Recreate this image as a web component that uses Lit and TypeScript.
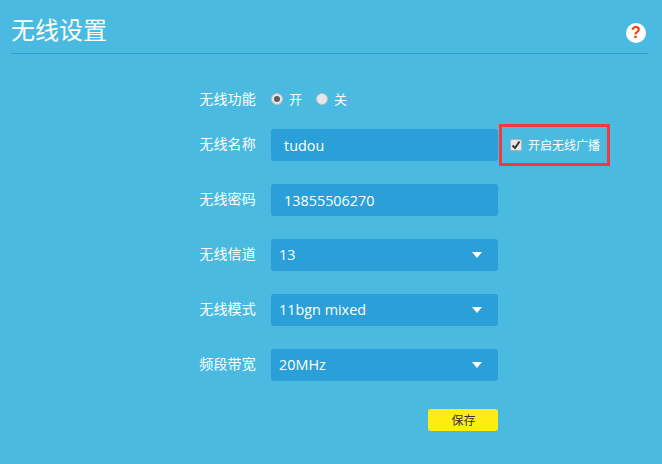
import { LitElement, html, css } from "lit";
import { customElement } from "lit/decorators.js";

const caret = html`<svg class="caret" width="10" height="6" viewBox="0 0 10 6"><path d="M0 0H10L5 6Z" fill="#fff"/></svg>`;

@customElement("app-root")
export class AppRoot extends LitElement {
  static styles = css`
    :host {
      display: block;
      width: 662px;
      height: 464px;
      background: #4abae0;
      color: #fff;
      font-family: "Open Sans", "Noto Sans CJK SC", sans-serif;
      overflow: hidden;
    }
    .head {
      margin: 0 14px 0 11px;
      height: 54px;
      box-sizing: border-box;
      border-bottom: 1px solid #2b9fd6;
      display: flex;
      justify-content: space-between;
      align-items: center;
      padding: 8px 2px 0 0;
    }
    .title { font: 24px/34px "Noto Sans CJK SC", sans-serif; font-weight: 400; margin: -3px 0 0; }
    .help { width: 20px; height: 20px; margin-top: 5px; border-radius: 50%; background: #fff; color: #f23c00; font: bold 16px/20px "Liberation Sans", sans-serif; text-align: center; }
    .form { display: flex; flex-direction: column; padding-top: 28px; }
    .row { display: flex; align-items: center; height: 32px; margin-bottom: 23px; }
    .row.radio { height: 34px; margin-bottom: 13px; }
    .label { width: 256px; box-sizing: border-box; padding-bottom: 5px; text-align: right; margin-right: 15px; font: 14px/20px "Noto Sans CJK SC", sans-serif; letter-spacing: 0.2px; }
    .row.radio .label { padding-bottom: 3px; }
    .field { width: 227px; height: 32px; box-sizing: border-box; background: #2a9fd8; border-radius: 3px; display: flex; align-items: center; justify-content: space-between; font-size: 14.4px; }
    .field.text { padding: 0 13px; }
    .field.select { padding: 0 16px 1px 8px; }
    .caret { display: block; margin-top: 1px; }
    .opt { display: flex; align-items: center; font: 13px/20px "Noto Sans CJK SC", sans-serif; margin-right: 14px; }
    .dot { width: 12px; height: 12px; box-sizing: border-box; border-radius: 50%; background: #e6e6e6; border: 1px solid #bdbdbd; margin-right: 6px; display: flex; align-items: center; justify-content: center; }
    .dot i { width: 6px; height: 6px; border-radius: 50%; background: #5f5f5f; display: block; }
    .broadcast { width: 111px; height: 42px; box-sizing: border-box; border: 3px solid #f03a3e; margin-left: 1px; display: flex; align-items: center; padding-left: 8px; font: 12px/16px "Noto Sans CJK SC", sans-serif; }
    .check { width: 12px; height: 12px; box-sizing: border-box; border: 1px solid #b5b5b5; border-radius: 2px; background: #e8e8e8; margin-right: 6px; display: block; flex: none; }
    .actions { display: flex; justify-content: flex-start; padding-left: 428px; margin-top: 5px; }
    .save { width: 70px; height: 22px; background: #ffec12; border: 0; padding: 0 0 0 1px; border-radius: 3px; color: #333; font: 12px/22px "Noto Sans CJK SC", sans-serif; }
  `;

  private selectRow(label: string, value: string) {
    return html`<div class="row"><span class="label">${label}</span><div class="field select"><span>${value}</span>${caret}</div></div>`;
  }

  render() {
    return html`
      <header class="head">
        <h1 class="title">无线设置</h1>
        <div class="help">?</div>
      </header>
      <div class="form">
        <div class="row radio">
          <span class="label">无线功能</span>
          <span class="opt"><span class="dot"><i></i></span>开</span>
          <span class="opt"><span class="dot"></span>关</span>
        </div>
        <div class="row">
          <span class="label">无线名称</span>
          <div class="field text">tudou</div>
          <div class="broadcast">
            <svg class="check" viewBox="0 0 10 10"><path d="M1.5 5.5L4 8L8.5 1.5" fill="none" stroke="#333" stroke-width="2"/></svg>
            开启无线广播
          </div>
        </div>
        <div class="row"><span class="label">无线密码</span><div class="field text">13855506270</div></div>
        ${this.selectRow("无线信道", "13")}
        ${this.selectRow("无线模式", "11bgn mixed")}
        ${this.selectRow("频段带宽", "20MHz")}
        <div class="actions"><button class="save">保存</button></div>
      </div>
    `;
  }
}
